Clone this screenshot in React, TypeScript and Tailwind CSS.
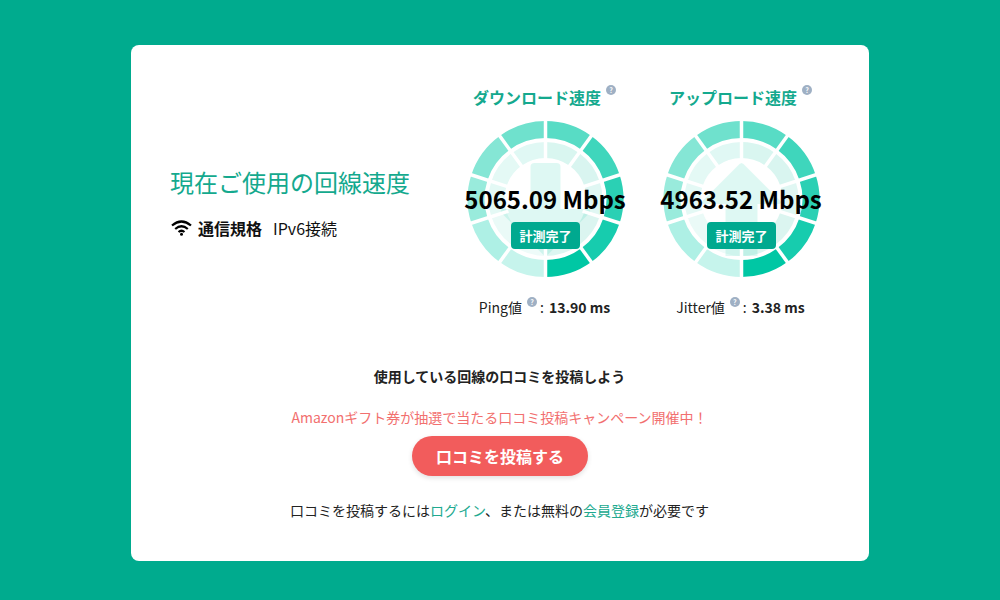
const font = { fontFamily: '"Noto Sans CJK JP", "Noto Sans", sans-serif' };

const OUTER = ["#58dcc5", "#3fd6bc", "#2bd0b4", "#17ccae", "#00c7a4", "#c6f4ec", "#aef0e5", "#99ebdc", "#85e6d5", "#6fe1cd"];
const INNER = ["#d9f6f0", "#d9f5f0", "#e0f7f3", "#dbf5f0", "#dcf6f1", "#eefbf9", "#eafaf7", "#e4f9f5", "#e4f9f5", "#e0f8f4"];

function point(r: number, deg: number) {
  const a = ((deg - 90) * Math.PI) / 180;
  return `${(79 + r * Math.cos(a)).toFixed(2)} ${(79 + r * Math.sin(a)).toFixed(2)}`;
}

function arc(r1: number, r2: number, from: number, to: number) {
  return `M${point(r2, from)}A${r2} ${r2} 0 0 1 ${point(r2, to)}L${point(r1, to)}A${r1} ${r1} 0 0 0 ${point(r1, from)}Z`;
}

function Gauge({ up }: { up: boolean }) {
  return (
    <svg width="158" height="158" viewBox="0.5 0 158 158">
      {INNER.map((c, i) => (
        <path key={i} d={arc(41, 57, i * 36, i * 36 + 36)} fill={c} />
      ))}
      {up ? (
        <path d="M79 43l2 1 37 37q2 3-2 3h-21v52h-32v-52h-21q-4 0-2-3l37-37z" fill="#00c7a4" fillOpacity="0.13" />
      ) : (
        <path d="M68 43h22q4 0 4 4v42h28q3 1 1 4l-44 44-44-44q-2-3 1-4h28v-42q0-4 4-4z" fill="#00c7a4" fillOpacity="0.13" />
      )}
      {OUTER.map((c, i) => (
        <path key={i} d={arc(61, 78, i * 36, i * 36 + 36)} fill={c} />
      ))}
      {OUTER.map((_, i) => (
        <line
          key={i}
          x1={79 + 39 * Math.cos((i * 36 * Math.PI) / 180)}
          y1={79 + 39 * Math.sin((i * 36 * Math.PI) / 180)}
          x2={79 + 80 * Math.cos((i * 36 * Math.PI) / 180)}
          y2={79 + 80 * Math.sin((i * 36 * Math.PI) / 180)}
          stroke="#fff"
          strokeWidth="3.5"
          transform="rotate(-90 79 79)"
        />
      ))}
    </svg>
  );
}

function Help() {
  return (
    <span className="ml-[5px] flex h-[10px] w-[10px] items-center justify-center rounded-full bg-[#9fb0c4] text-[7px] font-bold leading-none text-white">
      ?
    </span>
  );
}

function Meter({ title, value, up, label, sub }: { title: string; value: string; up: boolean; label: string; sub: string }) {
  return (
    <div className="flex w-[180px] flex-col items-center">
      <div className="mr-[3px] flex items-start">
        <span className="text-[16px] font-bold leading-[24px] text-[#14a98e]">{title}</span>
        <Help />
      </div>
      <div className="relative mt-[11px] h-[158px] w-[158px]">
        <Gauge up={up} />
        <div className="absolute left-[78px] top-[61px] -translate-x-1/2 whitespace-nowrap text-[24px] font-bold leading-[36px] text-black">
          {value}
        </div>
        <div className="absolute left-[44px] top-[102px] flex h-[27px] w-[69px] items-center justify-center rounded bg-[#00a98f] text-[13px] font-bold text-white">
          計測完了
        </div>
      </div>
      <div className="mr-[3px] mt-[19px] flex items-start text-[14px] leading-[20px] text-[#222]">
        <span>{label}</span>
        <Help />
        <span className="ml-[3px] mr-[5px]">:</span>
        <span className="font-bold">{sub}</span>
      </div>
    </div>
  );
}

export default function App() {
  return (
    <div style={font} className="flex h-[600px] w-full items-start justify-center bg-[#00ab8e] pt-[45px]">
      <div className="flex h-[516px] w-[738px] flex-col rounded-lg bg-white pt-[40px]">
        <div className="flex items-center pl-[40px]">
          <div className="mt-[2px] w-[285px]">
            <h2 className="-ml-[1px] text-[24px] font-normal leading-[34px] text-[#14a98e]">現在ご使用の回線速度</h2>
            <div className="mt-[17px] flex items-center text-[#111]">
              <svg width="21" height="17" viewBox="0 0 21 17" fill="none" stroke="#000" strokeWidth="2.2">
                <path d="M1 6.5Q10.5-1.5 20 6.5" />
                <path d="M4.2 10Q10.5 4.5 16.800 10" />
                <path d="M7.500 13Q10.500 10.500 13.500 13" />
                <circle cx="10.500" cy="15.200" r="1.500" fill="#000" stroke="none" />
              </svg>
              <span className="ml-[6px] text-[16px] font-bold leading-[24px]">通信規格</span>
              <span className="ml-[11px] text-[16px] leading-[24px]">IPv6接続</span>
            </div>
          </div>
          <div className="flex gap-[16px]">
            <Meter title="ダウンロード速度" value="5065.09 Mbps" up={false} label="Ping値" sub="13.90 ms" />
            <Meter title="アップロード速度" value="4963.52 Mbps" up label="Jitter値" sub="3.38 ms" />
          </div>
        </div>
        <div className="mt-[49px] flex flex-col items-center text-[14px] leading-[20px] text-[#222]">
          <p className="mr-[1px] font-bold">使用している回線の口コミを投稿しよう</p>
          <p className="mr-[1px] mt-[21px] text-[#f2706f]">Amazonギフト券が抽選で当たる口コミ投稿キャンペーン開催中！</p>
          <button className="mt-[9px] h-[40px] w-[176px] rounded-full bg-[#f25c5c] text-[16px] font-bold text-white shadow-[0_2px_5px_rgba(0,0,0,0.12)]">
            口コミを投稿する
          </button>
          <p className="mr-[1px] mt-[24px]">
            口コミを投稿するには<span className="text-[#21a98f]">ログイン</span>、または無料の
            <span className="text-[#21a98f]">会員登録</span>が必要です
          </p>
        </div>
      </div>
    </div>
  );
}
